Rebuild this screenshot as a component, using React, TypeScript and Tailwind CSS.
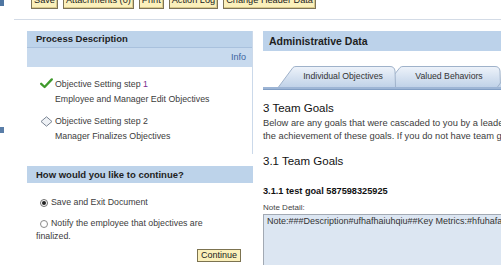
import React from 'react';

const font = { fontFamily: '"Liberation Sans", Arial, sans-serif' };

const TopButton = ({ label }: { label: string }) => (
  <button className="h-[17px] px-[2px] border border-[#7d7356] bg-[#fbf0bb] text-[9.2px] leading-[15px] text-[#222] shadow-[inset_-1px_-1px_0_#d9c98c]">
    {label}
  </button>
);

const Tab = ({ label, width, slant, id }: { label: string; width: number; slant: number; id: string }) => (
  <div className="relative h-[21px] shrink-0 flex items-center justify-center text-[8.7px] text-[#333]" style={{ width }}>
    <svg className="absolute inset-0" width={width} height={21} viewBox={`0 0 ${width} 21`}>
      <defs>
        <linearGradient id={id} x1="0" y1="0" x2="0" y2="1">
          <stop offset="0" stopColor="#eef3fa" />
          <stop offset="1" stopColor="#c0d2e8" />
        </linearGradient>
      </defs>
      <path
        d={`M0.5 21 L${slant - 1} 1.5 Q${slant} 0.5 ${slant + 2} 0.5 L${width - 6} 0.5 Q${width - 1.5} 0.5 ${width - 1} 5 L${width - 0.5} 21`}
        fill={`url(#${id})`}
        stroke="#9fb2ca"
      />
    </svg>
    <span className="relative" style={{ paddingLeft: slant - 4 }}>{label}</span>
  </div>
);

export default function App() {
  return (
    <div className="w-[501px] h-[265px] overflow-hidden bg-white relative" style={font}>
      {/* corner marks */}
      <div className="absolute left-0 top-0 w-[4px] h-[6px] bg-[#4f76a2]" />
      <div className="absolute left-0 top-[127px] w-[4px] h-[6px] bg-[#5a7ea8]" />

      <div className="flex gap-[5px] pl-[31px] -mt-[8px]">
        <TopButton label="Save" />
        <TopButton label="Attachments (0)" />
        <TopButton label="Print" />
        <TopButton label="Action Log" />
        <TopButton label="Change Header Data" />
      </div>

      <div className="ml-[14px] mt-[10px] h-px bg-[#d3dbe6]" />

      <div className="flex gap-[10px] pl-[27px] mt-[11px]">
        {/* left column */}
        <div className="w-[226px] shrink-0 flex flex-col">
          <div className="border-r border-[#cbd9ea] pb-[10px]">
            <div className="h-[17px] bg-[#bdd3ea] border-b border-[#a9c1dd] px-[9px] text-[9.5px] font-bold leading-[16px] text-[#1e1e1e]">
              Process Description
            </div>
            <div className="h-[19px] bg-[#c8daee] flex items-center justify-end pr-[6px] text-[9px] text-[#3b64a0]">Info</div>
            <div className="pt-[10px] pl-[13px] text-[8.8px] text-[#3c3c3c]">
              <div className="flex items-start gap-[2px]">
                <svg width="13" height="11" viewBox="0 0 13 11" className="mt-[1px]">
                  <path d="M1.2 5.8 L4.6 9 L11.8 1.4" fill="none" stroke="#3f9a2c" strokeWidth="2.3" strokeLinejoin="round" strokeLinecap="round" />
                </svg>
                <div className="leading-[15px]">
                  <div>Objective Setting step <span className="text-[#7b2f8e]">1</span></div>
                  <div>Employee and Manager Edit Objectives</div>
                </div>
              </div>
              <div className="flex items-start gap-[2px] mt-[7px]">
                <svg width="13" height="11" viewBox="0 0 13 11" className="mt-[2px]">
                  <path d="M6.5 0.8 L12 5.5 L6.5 10.2 L1 5.5 Z" fill="#eef1f5" stroke="#7b8594" strokeWidth="1" />
                </svg>
                <div className="leading-[15px]">
                  <div>Objective Setting step 2</div>
                  <div>Manager Finalizes Objectives</div>
                </div>
              </div>
            </div>
          </div>

          <div className="mt-[12px] h-[17px] bg-[#bdd3ea] px-[9px] text-[9.5px] font-bold leading-[17px] text-[#1e1e1e]">
            How would you like to continue?
          </div>
          <div className="pl-[9px] pt-[13px] text-[8.8px] text-[#3c3c3c]">
            <div className="flex items-center gap-[3px] h-[14px] pl-[4px]">
              <span className="w-[8px] h-[8px] rounded-full border border-[#6e6e6e] bg-white flex items-center justify-center">
                <span className="w-[4px] h-[4px] rounded-full bg-[#222]" />
              </span>
              <span>Save and Exit Document</span>
            </div>
            <div className="flex items-center gap-[3px] h-[12px] mt-[8px] pl-[4px]">
              <span className="w-[8px] h-[8px] rounded-full border border-[#8a8a8a] bg-white" />
              <span>Notify the employee that objectives are</span>
            </div>
            <div className="leading-[13px]">finalized.</div>
          </div>
          <div className="flex justify-end pr-[12px] mt-[6px]">
            <button className="h-[13px] px-[3px] border border-[#7c7350] bg-[#fbf0bb] text-[9px] leading-[11px] text-[#222]">
              Continue
            </button>
          </div>
        </div>

        {/* right column */}
        <div className="flex-1 min-w-[260px] flex flex-col">
          <div className="h-[20px] bg-[#bcd2ea] pl-[6px] text-[10.5px] font-bold leading-[20px] text-[#1e1e1e] whitespace-nowrap">
            Administrative Data
          </div>
          <div className="mt-[15px] flex pl-[15px] items-end">
            <div className="relative z-10">
              <Tab id="t1" label="Individual Objectives" width={118} slant={16} />
            </div>
            <div className="-ml-[12px]">
              <Tab id="t2" label="Valued Behaviors" width={117} slant={17} />
            </div>
            <div className="-ml-[4px]">
              <Tab id="t3" label="" width={40} slant={16} />
            </div>
          </div>
          <div className="h-[3px] bg-[#9db5d5] border-b border-[#819ec4]" />

          <div className="pt-[11px] text-[#111] whitespace-nowrap">
            <div className="text-[11.5px] leading-[14px]">3 Team Goals</div>
            <div className="text-[9.3px] leading-[13px] text-[#3c3c3c] mt-[2px]">
              <div>Below are any goals that were cascaded to you by a leader to contribute to</div>
              <div>the achievement of these goals. If you do not have team goals, please skip</div>
            </div>
            <div className="mt-[11px] text-[11.5px] leading-[14px]">3.1 Team Goals</div>
            <div className="mt-[17px] text-[9.2px] font-bold leading-[12px]">3.1.1 test goal 587598325925</div>
            <div className="mt-[6px] text-[8px] leading-[10px] text-[#444]">Note Detail:</div>
            <div className="mt-[1px] h-[60px] bg-[#dce6f2] border border-[#a2a9b3] px-[3px] pt-[1px] text-[9px] leading-[11px] text-[#333]">
              Note:###Description#ufhafhaiuhqiu##Key Metrics:#hfuhafafhuiah
            </div>
          </div>
        </div>
      </div>
    </div>
  );
}
